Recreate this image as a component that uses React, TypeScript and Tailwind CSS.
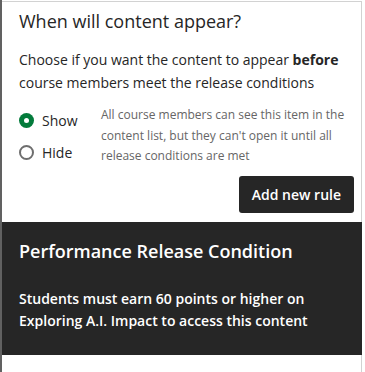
import { useState } from 'react';

const RadioOption = ({
  label,
  checked,
  onSelect,
}: {
  label: string;
  checked: boolean;
  onSelect: () => void;
}) => (
  <button
    type="button"
    onClick={onSelect}
    className="flex items-center gap-[8px] h-[32px] text-[14px] text-[#262626]"
  >
    {checked ? (
      <span className="w-[15px] h-[15px] rounded-full bg-[#037b3b] flex items-center justify-center">
        <span className="w-[5px] h-[5px] rounded-full bg-white" />
      </span>
    ) : (
      <span className="w-[15px] h-[15px] rounded-full border-2 border-[#6e6e6e] bg-white" />
    )}
    {label}
  </button>
);

const App = () => {
  const [visibility, setVisibility] = useState<'show' | 'hide'>('show');

  return (
    <div
      className="w-[365px] h-[372px] bg-white flex overflow-hidden"
      style={{ fontFamily: '"Open Sans", "Noto Sans", sans-serif' }}
    >
      <div className="w-[2px] h-full bg-[#616161]" />
      <div className="flex-1 mt-px mr-[3px] border-t border-r border-[#d2d2d2] flex flex-col">
        <div className="pl-[17px] pr-[7px] pt-[6px]">
          <h2 className="text-[18px] leading-[26px] text-[#262626]">When will content appear?</h2>
          <p className="mt-[14px] text-[14px] leading-[23px] text-[#262626]">
            Choose if you want the content to appear <b className="font-bold">before</b> course
            members meet the release conditions
          </p>

          <div className="mt-[10px] flex">
            <div className="flex flex-col w-[82px]">
              <RadioOption label="Show" checked={visibility === 'show'} onSelect={() => setVisibility('show')} />
              <RadioOption label="Hide" checked={visibility === 'hide'} onSelect={() => setVisibility('hide')} />
            </div>
            <p className="flex-1 text-[12px] leading-[20.5px] text-[#666666] pt-[1px]">
              All course members can see this item in the content list, but they can't open it until all
              release conditions are met
            </p>
          </div>

          <div className="flex justify-end mt-[8px]">
            <button
              type="button"
              className="h-[37px] px-[13px] rounded-[3px] bg-[#262626] text-white text-[14px] font-semibold"
            >
              Add new rule
            </button>
          </div>
        </div>

        <div className="mt-[9px] -mr-px h-[133px] bg-[#262626] px-[17px] pt-[16px] text-white">
          <h3 className="text-[18px] leading-[26px] font-semibold">Performance Release Condition</h3>
          <p className="mt-[24px] text-[14px] leading-[22px] font-semibold">
            Students must earn 60 points or higher on Exploring A.I. Impact to access this content
          </p>
        </div>
      </div>
    </div>
  );
};

export default App;
